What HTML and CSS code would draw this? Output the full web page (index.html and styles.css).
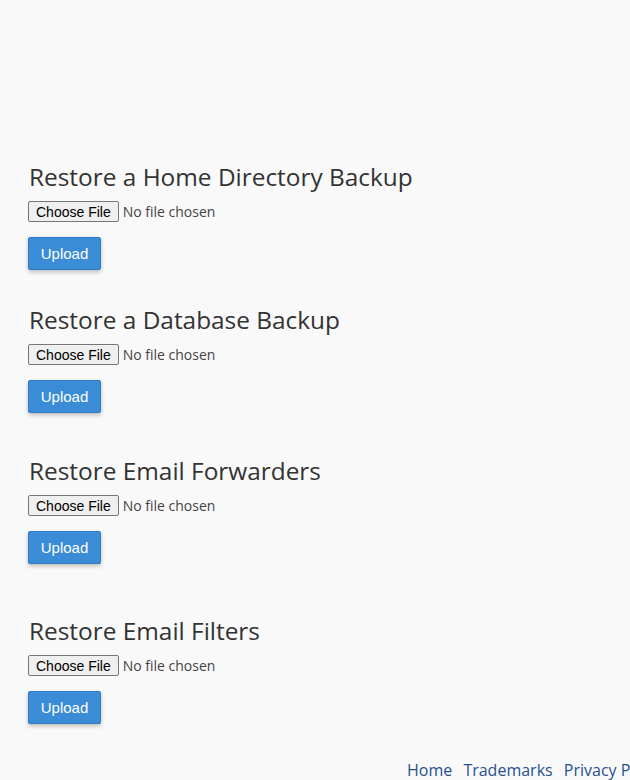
FILE: index.html
```html
<!DOCTYPE html>
<html>
<head>
<meta charset="utf-8">
<link rel="stylesheet" href="styles.css">
</head>
<body>
<main class="page">
  <section class="restore s1">
    <h2>Restore a Home Directory Backup</h2>
    <input type="file" class="file">
    <button class="upload">Upload</button>
  </section>
  <section class="restore s2">
    <h2>Restore a Database Backup</h2>
    <input type="file" class="file">
    <button class="upload">Upload</button>
  </section>
  <section class="restore s3">
    <h2>Restore Email Forwarders</h2>
    <input type="file" class="file">
    <button class="upload">Upload</button>
  </section>
  <section class="restore s4">
    <h2>Restore Email Filters</h2>
    <input type="file" class="file">
    <button class="upload">Upload</button>
  </section>
</main>
<footer class="footer">
  <a href="#">Home</a>
  <a href="#">Trademarks</a>
  <a href="#">Privacy Policy</a>
</footer>
</body>
</html>
```
FILE: styles.css
```css
html, body {
  margin: 0;
  padding: 0;
  background: #f9f9fa;
  overflow: hidden;
}
body {
  width: 630px;
  height: 780px;
  font-family: "Open Sans", "Liberation Sans", sans-serif;
  color: #333;
}
.page {
  padding: 160px 28px 0 28px;
}
.restore {
  display: flex;
  flex-direction: column;
  align-items: flex-start;
}
.restore h2 {
  margin: 0 0 6px 1px;
  font-weight: 400;
  font-size: 24.4px;
  line-height: 34px;
  color: #333;
}
.file {
  font-family: "Open Sans", sans-serif;
  font-size: 14px;
  color: #444;
  height: 21px;
  padding: 0;
  margin: 1px 0 0 0;
}
.file::file-selector-button {
  font-family: "Liberation Sans", Arial, sans-serif;
  font-size: 14px;
  color: #000;
  background: #efefef;
  border: 1px solid #767676;
  border-radius: 2px;
  height: 21px;
  padding: 0 7px;
  margin-right: 4px;
}
.upload {
  margin-top: 15px;
  width: 73px;
  height: 33px;
  background: #3a8cd6;
  color: #fff;
  border: 1px solid #2f7cc2;
  border-radius: 2px;
  font-family: "Liberation Sans", Arial, sans-serif;
  font-size: 15px;
  box-shadow: 0 2px 4px rgba(0,0,0,0.25);
  padding: 0;
}
.s2 { margin-top: 33px; }
.s3 { margin-top: 41px; }
.s4 { margin-top: 50px; }
.footer {
  position: absolute;
  left: 407px;
  top: 759px;
  white-space: nowrap;
  font-size: 16px;
}
.footer a {
  color: #27518f;
  text-decoration: none;
  margin-right: 7px;
}
```
